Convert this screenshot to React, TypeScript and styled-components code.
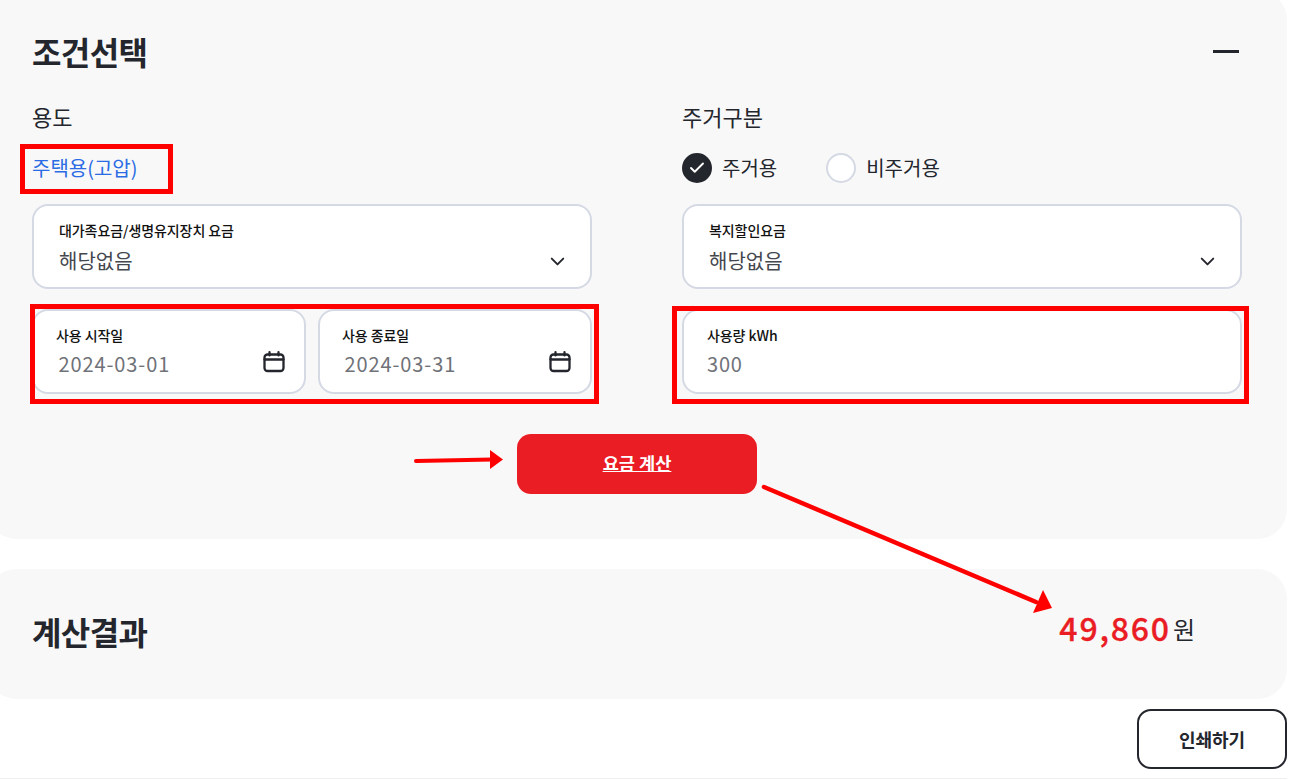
import React from 'react'
import styled, { createGlobalStyle } from 'styled-components'
import { Check, ChevronDown } from 'lucide-react'

const GlobalStyle = createGlobalStyle`
  html, body { margin: 0; padding: 0; background: #fff; overflow: hidden; }
  * { box-sizing: border-box; }
  body { font-family: "Noto Sans CJK KR", "Noto Sans", sans-serif; color: #24262d; }
`

const CalendarIcon = () => (
    <svg width="22" height="22" viewBox="0 0 22 22" fill="none" stroke="#24262d" strokeWidth="2.3" strokeLinecap="round">
        <rect x="1.5" y="3.5" width="19" height="16.5" rx="3" />
        <path d="M1.5 8.5h19M6.5 1.2v3.2M15.5 1.2v3.2" />
    </svg>
)

const Arrows = () => (
    <ArrowLayer width="1309" height="780" viewBox="0 0 1309 780">
        <path d="M416 461 L492 459.6" stroke="#ff0000" strokeWidth="4" strokeLinecap="round" fill="none" />
        <path d="M490 450 L503 459.5 L490 469 Z" fill="#ff0000" />
        <path d="M764 487 L1036 602" stroke="#ff0000" strokeWidth="4.5" strokeLinecap="round" fill="none" />
        <path d="M1043 590 L1052 608 L1033 613 Z" fill="#ff0000" />
    </ArrowLayer>
)

const SelectField = ({ label, value }: { label: string; value: string }) => (
    <Field>
        <FieldLabel>{label}</FieldLabel>
        <SelectValue>{value}</SelectValue>
        <SelectChevron><ChevronDown size={23} strokeWidth={2} /></SelectChevron>
    </Field>
)

const DateField = ({ label, value }: { label: string; value: string }) => (
    <DateInput>
        <InputLabel>{label}</InputLabel>
        <DateValue>{value}</DateValue>
        <DateIcon><CalendarIcon /></DateIcon>
    </DateInput>
)

const App = () => (
    <Page>
        <GlobalStyle />
        <Panel>
            <TitleRow>
                <Title>조건선택</Title>
                <Collapse />
            </TitleRow>
            <Columns>
                <Column>
                    <Label>용도</Label>
                    <Usage>주택용(고압)</Usage>
                    <SelectField label="대가족요금/생명유지장치 요금" value="해당없음" />
                    <DateRow>
                        <DateField label="사용 시작일" value="2024-03-01" />
                        <DateField label="사용 종료일" value="2024-03-31" />
                    </DateRow>
                </Column>
                <Column>
                    <Label>주거구분</Label>
                    <RadioRow>
                        <RadioOption>
                            <RadioMark $checked><Check size={18} strokeWidth={2.5} color="#fff" /></RadioMark>
                            주거용
                        </RadioOption>
                        <RadioOption>
                            <RadioMark />
                            비주거용
                        </RadioOption>
                    </RadioRow>
                    <SelectField label="복지할인요금" value="해당없음" />
                    <InputField>
                        <InputLabel>사용량 kWh</InputLabel>
                        <InputValue>300</InputValue>
                    </InputField>
                </Column>
            </Columns>
            <Actions>
                <CalcButton>요금 계산</CalcButton>
            </Actions>
        </Panel>
        <ResultPanel>
            <Title>계산결과</Title>
            <Amount>
                <AmountValue>49,860</AmountValue>
                <AmountUnit>원</AmountUnit>
            </Amount>
        </ResultPanel>
        <Footer>
            <PrintButton>인쇄하기</PrintButton>
        </Footer>
        <UsageBox />
        <DateBox />
        <KwhBox />
        <Arrows />
    </Page>
)

const Page = styled.div`
  position: relative;
  width: 1309px;
  height: 780px;
  overflow: hidden;
`
const Panel = styled.section`
  width: 1300px;
  height: 549px;
  margin: -10px 0 0 -13px;
  padding: 37px 45px 0;
  background: #f8f8f8;
  border-radius: 30px;
`
const TitleRow = styled.div`
  display: flex;
  align-items: center;
  justify-content: space-between;
  height: 48px;
`
const Title = styled.h2`
  margin: 0;
  font-size: 32px;
  line-height: 48px;
  font-weight: 700;
  letter-spacing: -0.6px;
  color: #24262d;
`
const Collapse = styled.span`
  width: 26px;
  height: 3px;
  margin-right: 3px;
  background: #24262d;
`
const Columns = styled.div`
  display: grid;
  grid-template-columns: 560px 560px;
  column-gap: 90px;
  padding-top: 26px;
`
const Column = styled.div`
  display: flex;
  flex-direction: column;
`
const Label = styled.div`
  height: 30px;
  font-size: 22px;
  line-height: 30px;
  font-weight: 400;
`
const Usage = styled.div`
  height: 30px;
  margin: 22px 0 21px;
  font-size: 20px;
  line-height: 30px;
  color: #2b6be4;
`
const RadioRow = styled.div`
  display: flex;
  gap: 49px;
  height: 30px;
  margin: 22px 0 21px;
`
const RadioOption = styled.label`
  display: flex;
  align-items: center;
  gap: 10px;
  font-size: 20px;
  line-height: 30px;
`
const RadioMark = styled.span<{ $checked?: boolean }>`
  display: flex;
  align-items: center;
  justify-content: center;
  width: 30px;
  height: 30px;
  border-radius: 50%;
  background: ${p => (p.$checked ? '#24262d' : '#fff')};
  border: 2px solid ${p => (p.$checked ? '#24262d' : '#d5d9e4')};
`
const Field = styled.div`
  position: relative;
  height: 85px;
  padding: 13px 25px 0;
  background: #fff;
  border: 2px solid #d5d9e4;
  border-radius: 16px;
`
const FieldLabel = styled.div`
  font-size: 14px;
  line-height: 22px;
  font-weight: 500;
  letter-spacing: -0.08px;
  color: #111;
`
const SelectValue = styled.div`
  margin-top: 5px;
  font-size: 20px;
  line-height: 30px;
  color: #44474e;
`
const SelectChevron = styled.span`
  position: absolute;
  right: 21px;
  top: 44px;
  display: flex;
  color: #24262d;
`
const DateRow = styled.div`
  display: grid;
  grid-template-columns: 274px 274px;
  gap: 12px;
`
const InputField = styled(Field)`
  margin-top: 20px;
  padding: 13px 23px 0;
`
const DateInput = styled(InputField)`
  padding-left: 22px;
`
const InputLabel = styled(FieldLabel)``
const InputValue = styled.div`
  margin-top: 3px;
  font-size: 20px;
  line-height: 30px;
  letter-spacing: 0.8px;
  color: #6f7278;
`
const DateValue = styled(InputValue)`
  margin-left: 2.5px;
  letter-spacing: 0.9px;
`
const DateIcon = styled.span`
  position: absolute;
  right: 19px;
  top: 40px;
  display: flex;
`
const Actions = styled.div`
  display: flex;
  justify-content: center;
  padding-top: 40px;
`
const CalcButton = styled.button`
  width: 240px;
  height: 60px;
  padding: 0 0 3px;
  border: 0;
  border-radius: 14px;
  background: #ea1d24;
  color: #fff;
  font-family: inherit;
  font-size: 17.6px;
  font-weight: 700;
  text-decoration: underline;
`
const ResultPanel = styled.section`
  display: flex;
  align-items: center;
  justify-content: space-between;
  width: 1300px;
  height: 130px;
  margin: 30px 0 0 -13px;
  padding: 0 92px 7px 45px;
  background: #f8f8f8;
  border-radius: 30px;
`
const Amount = styled.div`
  display: flex;
  align-items: center;
  gap: 2px;
  margin-bottom: 3px;
`
const AmountValue = styled.span`
  margin-bottom: 4px;
  font-size: 32px;
  line-height: 48px;
  font-weight: 500;
  letter-spacing: 1.8px;
  -webkit-text-stroke: 0.3px #ea1d24;
  color: #ea1d24;
`
const AmountUnit = styled.span`
  font-size: 24px;
  line-height: 36px;
  color: #24262d;
`
const Footer = styled.div`
  display: flex;
  justify-content: flex-end;
  width: 1287px;
  height: 70px;
  margin-top: 10px;
  border-bottom: 1px solid #efefef;
`
const PrintButton = styled.button`
  width: 150px;
  height: 60px;
  background: #fff;
  border: 2px solid #24262d;
  border-radius: 14px;
  color: #24262d;
  font-family: inherit;
  font-size: 18px;
  font-weight: 700;
`
const MarkBox = styled.div`
  position: absolute;
  border: 5px solid #ff0000;
  pointer-events: none;
`
const UsageBox = styled(MarkBox)`
  left: 20px;
  top: 144px;
  width: 153px;
  height: 50px;
`
const DateBox = styled(MarkBox)`
  left: 30px;
  top: 304px;
  width: 569px;
  height: 100px;
`
const KwhBox = styled(MarkBox)`
  left: 672px;
  top: 306px;
  width: 577px;
  height: 98px;
`
const ArrowLayer = styled.svg`
  position: absolute;
  left: 0;
  top: 0;
  pointer-events: none;
`

export default App
